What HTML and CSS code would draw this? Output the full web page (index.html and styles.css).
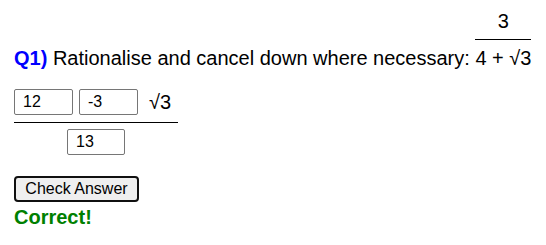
FILE: index.html
```html
<!DOCTYPE html>
<html>
<head>
<meta charset="utf-8">
<link rel="stylesheet" href="styles.css">
</head>
<body>
<div class="wrap">
  <div class="question"><span class="qnum">Q1)</span> Rationalise and cancel down where necessary: <span class="frac"><span class="num">3</span><span class="den">4 + √3</span></span></div>
  <div class="answer">
    <div class="a-num">
      <input class="box" type="text" value="12">
      <input class="box" type="text" value="-3">
      <span class="surd">√3</span>
    </div>
    <div class="a-den">
      <input class="box box-den" type="text" value="13">
    </div>
  </div>
  <div class="actions"><button class="check" type="button">Check Answer</button></div>
  <div class="result">Correct!</div>
</div>
</body>
</html>
```
FILE: styles.css
```css
html, body {
  margin: 0;
  padding: 0;
  background: #ffffff;
}
body {
  margin: 8px;
  font-family: "Liberation Sans", Arial, sans-serif;
  color: #000000;
}
.wrap {
  padding: 0 6px;
}
.question {
  font-size: 20px;
  line-height: 23px;
}
.qnum {
  color: #0000ff;
  font-weight: bold;
}
.frac {
  display: inline-block;
  vertical-align: baseline;
  font-size: 20px;
  line-height: 23px;
  padding-top: 2px;
}
.num {
  display: block;
  text-align: center;
  padding-bottom: 6px;
  border-bottom: 1px solid #000000;
}
.den {
  display: block;
  padding-top: 7px;
}
.answer {
  display: inline-flex;
  flex-direction: column;
  margin-top: 19px;
}
.a-num {
  display: flex;
  align-items: center;
  gap: 6px;
  padding-bottom: 7px;
  padding-right: 7px;
  border-bottom: 1px solid #000000;
}
.surd {
  font-size: 20px;
  line-height: 23px;
  margin-left: 5px;
}
.a-den {
  display: flex;
  justify-content: center;
  padding-top: 6px;
}
.box {
  box-sizing: border-box;
  width: 59px;
  height: 26px;
  margin: 0;
  padding: 0 8px;
  border: 1px solid #767676;
  border-radius: 2px;
  font-family: "Liberation Sans", Arial, sans-serif;
  font-size: 16px;
  color: #000000;
  background: #ffffff;
}
.box-den {
  width: 58px;
}
.actions {
  margin-top: 21px;
}
.check {
  box-sizing: border-box;
  height: 26px;
  width: 125px;
  margin: 0;
  padding: 0;
  border: 2px solid #101010;
  border-radius: 4px;
  background: #efefef;
  font-family: "Liberation Sans", Arial, sans-serif;
  font-size: 16px;
  color: #000000;
}
.result {
  margin-top: 4px;
  font-size: 20px;
  line-height: 23px;
  font-weight: bold;
  color: #008000;
}
```
